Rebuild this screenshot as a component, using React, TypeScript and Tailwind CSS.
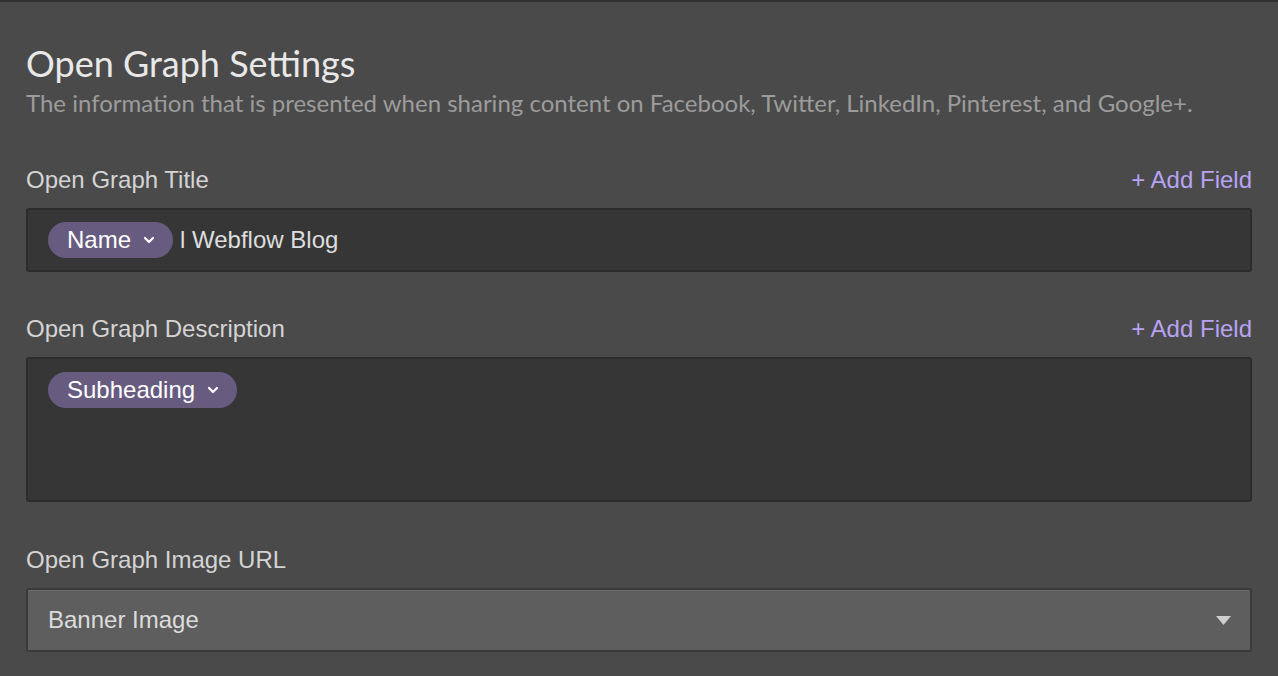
import React from "react";

function Pill({ label }: { label: string }) {
  return (
    <span className="inline-flex h-[36px] items-center rounded-full bg-[#675b80] pl-[19px] pr-[18px] text-[24px] text-white">
      <span className="leading-none">{label}</span>
      <svg className="ml-[12px]" width="12" height="8" viewBox="0 0 12 8">
        <path d="M2 2 L6 6 L10 2" fill="none" stroke="#fff" strokeWidth="2.2" strokeLinecap="round" strokeLinejoin="round" />
      </svg>
    </span>
  );
}

function LabelRow({ label, add }: { label: string; add?: boolean }) {
  return (
    <div className="flex h-[28px] items-center justify-between leading-[28px]">
      <span className="text-[24px] text-[#d4d4d4]">{label}</span>
      {add && <span className="text-[24px] text-[#b7a3f2]">+ Add Field</span>}
    </div>
  );
}

export default function App() {
  return (
    <div
      className="h-[676px] w-[1278px] overflow-hidden border-t-2 border-[#303030] bg-[#4a4a4a]"
      style={{ fontFamily: "'Liberation Sans', Arial, sans-serif" }}
    >
      <div className="pl-[26px] pr-[26px] pt-[39px]">
        <h1
          className="text-[36px] leading-[44px] text-[#e8e8e8]"
          style={{ fontFamily: "Lato, 'Open Sans', sans-serif" }}
        >
          Open Graph Settings
        </h1>
        <p
          className="mt-[3px] text-[24px] leading-[30px] text-[#9c9c9c]"
          style={{ fontFamily: "Lato, 'Open Sans', sans-serif" }}
        >
          The information that is presented when sharing content on Facebook, Twitter, LinkedIn, Pinterest, and Google+.
        </p>

        <div className="mt-[48px]">
          <LabelRow label="Open Graph Title" add />
          <div className="mt-[14px] flex h-[64px] items-center rounded-[3px] border-2 border-[#2c2c2c] bg-[#363636] pl-[20px]">
            <Pill label="Name" />
            <span className="ml-[7px] text-[24px] text-[#dedede]">l Webflow Blog</span>
          </div>
        </div>

        <div className="mt-[43px]">
          <LabelRow label="Open Graph Description" add />
          <div className="mt-[14px] h-[145px] rounded-[3px] border-2 border-[#2c2c2c] bg-[#363636] pl-[20px] pt-[13px]">
            <Pill label="Subheading" />
          </div>
        </div>

        <div className="mt-[44px]">
          <LabelRow label="Open Graph Image URL" />
          <div className="mt-[14px] flex h-[64px] items-center justify-between rounded-[3px] border-2 border-[#3a3a3a] bg-[#5e5e5e] pl-[20px] pr-[19px] shadow-[inset_0_1px_0_#6a6a6a]">
            <span className="text-[24px] text-[#dcdcdc]">Banner Image</span>
            <svg width="15" height="9" viewBox="0 0 15 9">
              <path d="M0 0 L15 0 L7.5 9 Z" fill="#cfcfcf" />
            </svg>
          </div>
        </div>
      </div>
    </div>
  );
}
